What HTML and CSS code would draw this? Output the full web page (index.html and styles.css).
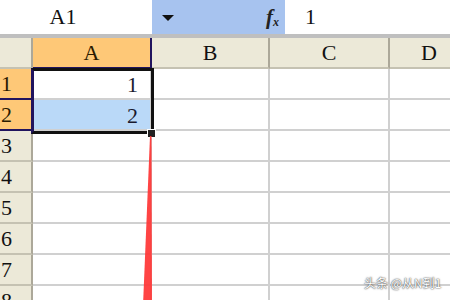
FILE: index.html
```html
<!DOCTYPE html>
<html lang="en">
<head>
  <meta charset="UTF-8">
  <title>Sheet1</title>
  <link rel="stylesheet" href="styles.css">
</head>
<body>

<div class="formula-bar">
  <div class="name-box">A1</div>
  <div class="name-drop"><span class="arrow"></span><span class="fx"><i>f</i><sub>x</sub></span></div>
  <div class="formula-input">1</div>
</div>

<div class="sheet">
  <div class="grid">
    <div class="hd corner"></div>
    <div class="hd col on">A</div>
    <div class="hd col">B</div>
    <div class="hd col">C</div>
    <div class="hd col">D</div>

    <div class="hd row on">1</div>
    <div class="cell num">1</div><div class="cell"></div><div class="cell"></div><div class="cell"></div>

    <div class="hd row on">2</div>
    <div class="cell num picked">2</div><div class="cell"></div><div class="cell"></div><div class="cell"></div>

    <div class="hd row">3</div>
    <div class="cell"></div><div class="cell"></div><div class="cell"></div><div class="cell"></div>
    <div class="hd row">4</div>
    <div class="cell"></div><div class="cell"></div><div class="cell"></div><div class="cell"></div>
    <div class="hd row">5</div>
    <div class="cell"></div><div class="cell"></div><div class="cell"></div><div class="cell"></div>
    <div class="hd row">6</div>
    <div class="cell"></div><div class="cell"></div><div class="cell"></div><div class="cell"></div>
    <div class="hd row">7</div>
    <div class="cell"></div><div class="cell"></div><div class="cell"></div><div class="cell"></div>
    <div class="hd row">8</div>
    <div class="cell"></div><div class="cell"></div><div class="cell"></div><div class="cell"></div>
  </div>

  <div class="selection"></div>
  <div class="fill-handle"></div>

  <svg class="drag-line" width="20" height="170" viewBox="0 0 20 170">
    <polygon points="9,0 10.5,0 11,170 2,170" fill="#ff3434" opacity="0.92"/>
  </svg>

  <div class="watermark">头条 @从N到1</div>
</div>

</body>
</html>
```

FILE: styles.css
```css
body {
  margin: 0;
  width: 450px;
  height: 300px;
  overflow: hidden;
  background-color: #fff;
  font-family: "Liberation Serif", "DejaVu Serif", serif;
  font-size: 22px;
  color: #111;
}

.formula-bar {
  display: flex;
  height: 34px;
  border-bottom: 4px solid #bfbfbf;
  box-sizing: content-box;
}

.name-box {
  width: 152px;
  background-color: #fff;
  text-align: center;
  line-height: 34px;
  padding-right: 26px;
  box-sizing: border-box;
}

.name-drop {
  width: 133px;
  background-color: #a7c3ef;
  display: flex;
  align-items: center;
  justify-content: space-between;
  padding: 0 6px 0 10px;
  box-sizing: border-box;
}

.arrow {
  width: 0;
  height: 0;
  border-left: 6px solid transparent;
  border-right: 6px solid transparent;
  border-top: 6px solid #111;
  margin-top: 2px;
}

.fx {
  font-family: "Liberation Serif", serif;
  font-size: 21px;
  font-weight: bold;
  color: #222;
  line-height: 1;
}

.fx sub {
  font-size: 12px;
  font-style: italic;
  vertical-align: -2px;
}

.formula-input {
  flex: 1;
  background-color: #fff;
  line-height: 34px;
  padding-left: 20px;
}

.sheet {
  position: relative;
  height: 262px;
  overflow: hidden;
}

.grid {
  display: grid;
  grid-template-columns: 33px 119px 118px 120px 80px;
  grid-auto-rows: 31px;
}

.hd {
  background-color: #ece9d8;
  border-right: 2px solid #aca899;
  border-bottom: 2px solid #c5c2b2;
  box-sizing: border-box;
  line-height: 30px;
}

.hd.col {
  text-align: center;
}

.hd.row {
  padding-left: 1px;
}

.hd.on {
  background-color: #fec877;
  color: #2a1a00;
}

.hd.col.on {
  border-right-color: #21145e;
  border-bottom-color: #21145e;
}

.hd.row.on {
  border-right-color: #21145e;
  border-bottom-color: #21145e;
}

.cell {
  border-right: 2px solid #d0d0d0;
  border-bottom: 2px solid #d0d0d0;
  box-sizing: border-box;
}

.cell.num {
  text-align: right;
  padding-right: 12px;
  line-height: 32px;
  color: #1a1a2e;
}

.cell.picked {
  background-color: #bad9f8;
}

.selection {
  position: absolute;
  left: 31px;
  top: 30px;
  width: 123px;
  height: 66px;
  border: 3px solid #111;
  border-left-color: #21145e;
  box-sizing: border-box;
}

.fill-handle {
  position: absolute;
  left: 147px;
  top: 91px;
  width: 7px;
  height: 7px;
  background-color: #222;
  border: 1px solid #fff;
}

.drag-line {
  position: absolute;
  left: 141px;
  top: 98px;
}

.watermark {
  position: absolute;
  left: 364px;
  top: 236px;
  font-family: "Noto Sans CJK SC", "Noto Sans", sans-serif;
  font-size: 12px;
  color: #fff;
  text-shadow: 0 0 2px #555, 0 0 1px #333;
}
```
